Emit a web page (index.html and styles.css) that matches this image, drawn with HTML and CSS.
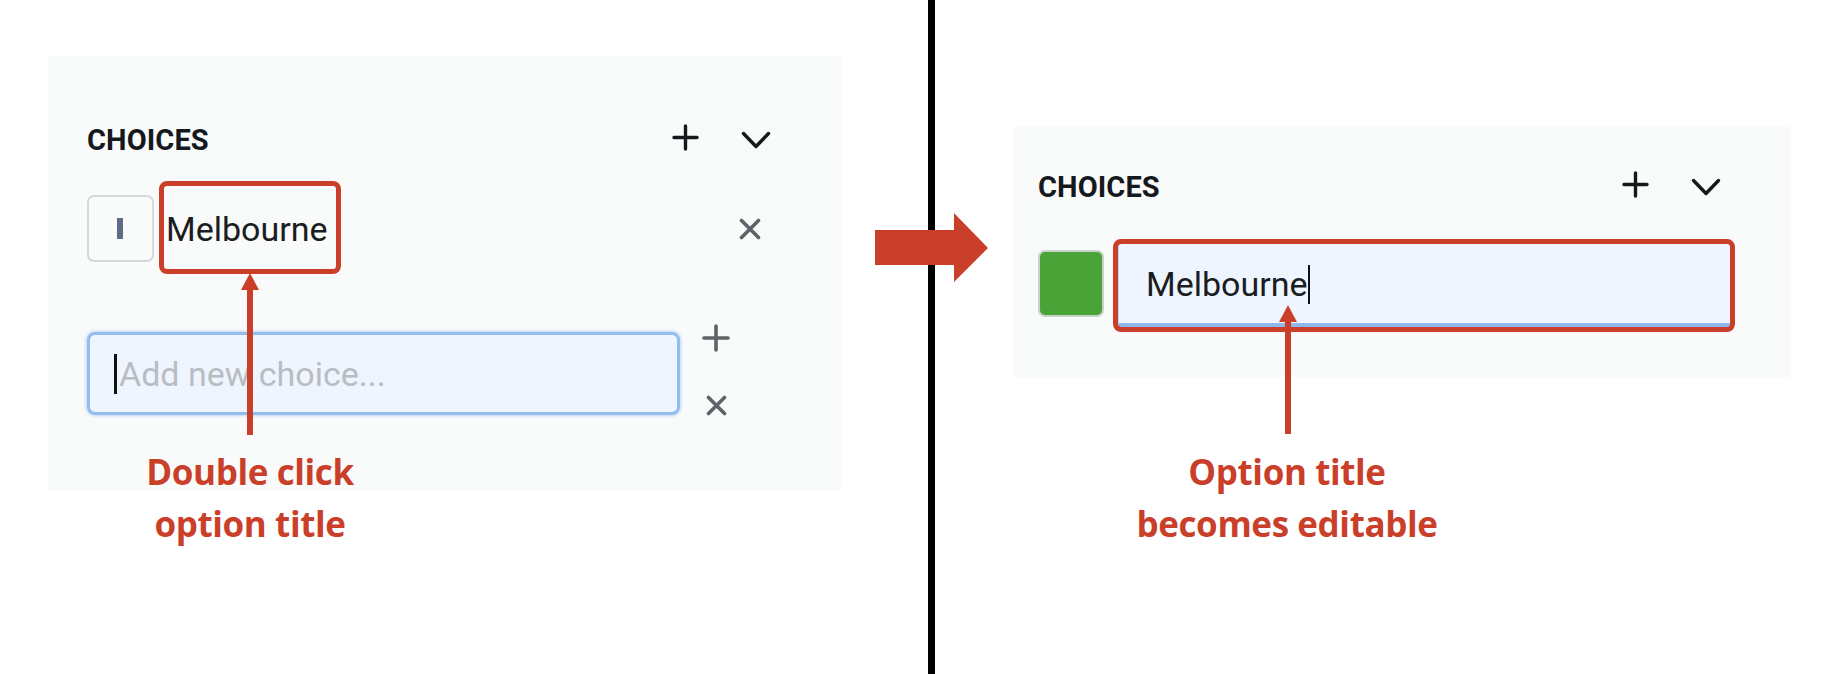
FILE: index.html
```html
<!DOCTYPE html>
<html lang="en">
<head>
<meta charset="utf-8">
<title>Choices – edit option title</title>
<link rel="stylesheet" href="styles.css">
</head>
<body>
<div class="page">
  <section class="pane pane-left">
    <div class="panel panel-left">
      <div class="hdr">
        <span class="title">CHOICES</span>
        <svg class="ic-plus" viewBox="0 0 27 27"><path d="M13.5 2v23M2 13.5h23" /></svg>
        <svg class="ic-chev" viewBox="0 0 30 18"><path d="M2.5 2.5L15 15.5 27.5 2.5" /></svg>
      </div>
      <div class="row">
        <div class="swatch swatch-empty"><span class="ibar"></span></div>
        <span class="label">Melbourne</span>
        <svg class="ic-x row-x" viewBox="0 0 22 22"><path d="M2.5 2.5l17 17M19.5 2.5l-17 17" /></svg>
      </div>
      <div class="newrow">
        <div class="newinput"><span class="caret"></span><span class="ph">Add new choice...</span></div>
        <div class="newactions">
          <svg class="ic-plus-sm" viewBox="0 0 28 28"><path d="M14 2v24M2 14h24" /></svg>
          <svg class="ic-x ic-x-sm" viewBox="0 0 21 21"><path d="M2.5 2.5l16 16M18.5 2.5l-16 16" /></svg>
        </div>
      </div>
      <div class="mark mark-left"></div>
    </div>
    <svg class="pointer pointer-left" viewBox="0 0 18 162"><polygon points="9,0 18,17 0,17" /><rect x="6" y="16" width="6" height="146" /></svg>
    <div class="note note-left">Double click<br>option title</div>
  </section>

  <div class="divider"></div>

  <section class="pane pane-right">
    <div class="panel panel-right">
      <div class="hdr">
        <span class="title">CHOICES</span>
        <svg class="ic-plus" viewBox="0 0 27 27"><path d="M13.5 2v23M2 13.5h23" /></svg>
        <svg class="ic-chev" viewBox="0 0 30 18"><path d="M2.5 2.5L15 15.5 27.5 2.5" /></svg>
      </div>
      <div class="row row-edit">
        <div class="swatch swatch-green"></div>
        <div class="mark-wrap">
          <div class="editinput"><span class="label">Melbourne</span><span class="caret caret-thin"></span></div>
        </div>
      </div>
    </div>
    <svg class="pointer pointer-right" viewBox="0 0 18 129"><polygon points="9,0 18,17 0,17" /><rect x="6" y="16" width="6" height="113" /></svg>
    <div class="note note-right">Option title<br>becomes editable</div>
  </section>

  <svg class="big-arrow" viewBox="0 0 113 69"><polygon points="0,17 79,17 79,0 113,35 79,69 79,52 0,52" /></svg>
</div>
</body>
</html>
```

FILE: styles.css
```css
* { box-sizing: border-box; }
html, body { margin: 0; padding: 0; background: #ffffff; }

.page {
  position: relative;
  display: flex;
  width: 1828px;
  height: 674px;
  overflow: hidden;
  font-family: Roboto, "Liberation Sans", sans-serif;
}

.pane { position: relative; height: 674px; }
.pane-left { width: 928px; flex: none; }
.pane-right { flex: 1; }

.divider { width: 7px; height: 674px; background: #000; flex: none; }

.panel { position: relative; background: #f9fafa; }
.panel-left {
  margin: 56px 0 0 48px;
  width: 793px;
  padding: 67px 70px 76px 39px;
}
.panel-right {
  margin: 127px 0 0 78px;
  width: 778px;
  padding: 43px 70px 45px 25px;
}

.hdr { display: flex; align-items: center; height: 34px; }
.title {
  flex: 1;
  font-size: 29px;
  line-height: 34px;
  font-weight: 700;
  color: #15191d;
  letter-spacing: 0.1px;
}
.hdr svg { fill: none; stroke: #15191c; stroke-width: 3.4; stroke-linecap: round; stroke-linejoin: round; }
.ic-plus { width: 27px; height: 27px; margin-right: 42px; margin-top: -6px; }
.ic-chev { width: 30px; height: 18px; }

.row { display: flex; align-items: center; height: 67px; margin-top: 38px; }
.swatch { width: 67px; height: 67px; border-radius: 7px; flex: none; }
.swatch-empty {
  border: 2px solid #d5d8dc;
  display: flex; align-items: center; justify-content: center;
}
.ibar {
  width: 6px; height: 21px;
  background: linear-gradient(90deg, #676b72 0 2px, #3e6fd6 2px 3.5px, #676b72 3.5px);
  margin-right: 2px;
}
.label {
  font-size: 34px;
  line-height: 40px;
  color: #1a1d21;
}
.row .label { margin-left: 12px; }
.ic-x { fill: none; stroke: #5f6267; stroke-width: 3.6; stroke-linecap: round; }
.row-x { width: 22px; height: 22px; margin-left: auto; margin-right: 10px; }

.newrow { display: flex; align-items: flex-start; margin-top: 70px; height: 83px; }
.newinput {
  width: 593px; height: 83px; flex: none;
  border: 3px solid #93bcef;
  border-radius: 8px;
  background: #eef5fe;
  box-shadow: 0 0 3px 1px rgba(120, 170, 235, 0.45);
  display: flex; align-items: center;
  padding-left: 24px;
}
.caret { width: 3px; height: 40px; background: #111; flex: none; }
.ph { font-size: 34px; line-height: 40px; color: #b9bdc3; margin-left: 2px; }
.newactions {
  margin-left: 22px; margin-top: -8px;
  width: 28px;
  display: flex; flex-direction: column; align-items: center;
}
.ic-plus-sm { width: 28px; height: 28px; fill: none; stroke: #5f6267; stroke-width: 3.6; stroke-linecap: round; }
.ic-x-sm { width: 21px; height: 21px; margin-top: 43px; }

.mark {
  position: absolute;
  border: 5px solid #ca3f2a;
  border-radius: 8px;
}
.mark-left { left: 111px; top: 125px; width: 182px; height: 93px; }

.row-edit { margin-top: 35px; height: 93px; }
.swatch-green {
  width: 66px; height: 67px;
  border: 2px solid #c9d4c8;
  background: #4aa336;
  margin-right: 9px;
  margin-top: -5px;
}
.mark-wrap {
  width: 622px; height: 93px; flex: none;
  border: 5px solid #ca3f2a;
  border-radius: 8px;
  overflow: hidden;
  background: #ca3f2a;
}
.editinput {
  height: 100%;
  background: #eef5fe;
  border-left: 1px solid #bcd4f3;
  border-bottom: 4px solid #8fb7ea;
  border-radius: 3px 0 0 3px;
  display: flex; align-items: center;
  padding-left: 27px;
}
.editinput .label { margin-left: 0; }
.caret-thin { width: 2px; height: 39px; margin-left: 0; margin-top: 1px; }

.pointer { position: absolute; fill: #ca3f2a; }
.pointer-left { left: 241px; top: 273px; width: 18px; height: 162px; }
.pointer-right { left: 344px; top: 305px; width: 18px; height: 129px; }

.note {
  position: absolute;
  top: 446px;
  text-align: center;
  font-family: "Open Sans", "Noto Sans", sans-serif;
  font-weight: 700;
  font-size: 35px;
  line-height: 52px;
  color: #ca3f2a;
  letter-spacing: -0.4px;
}
.note-left { left: 100px; width: 300px; }
.note-right { left: 152px; width: 400px; }

.big-arrow { position: absolute; left: 875px; top: 213px; width: 113px; height: 69px; fill: #ca3f2a; }
```
